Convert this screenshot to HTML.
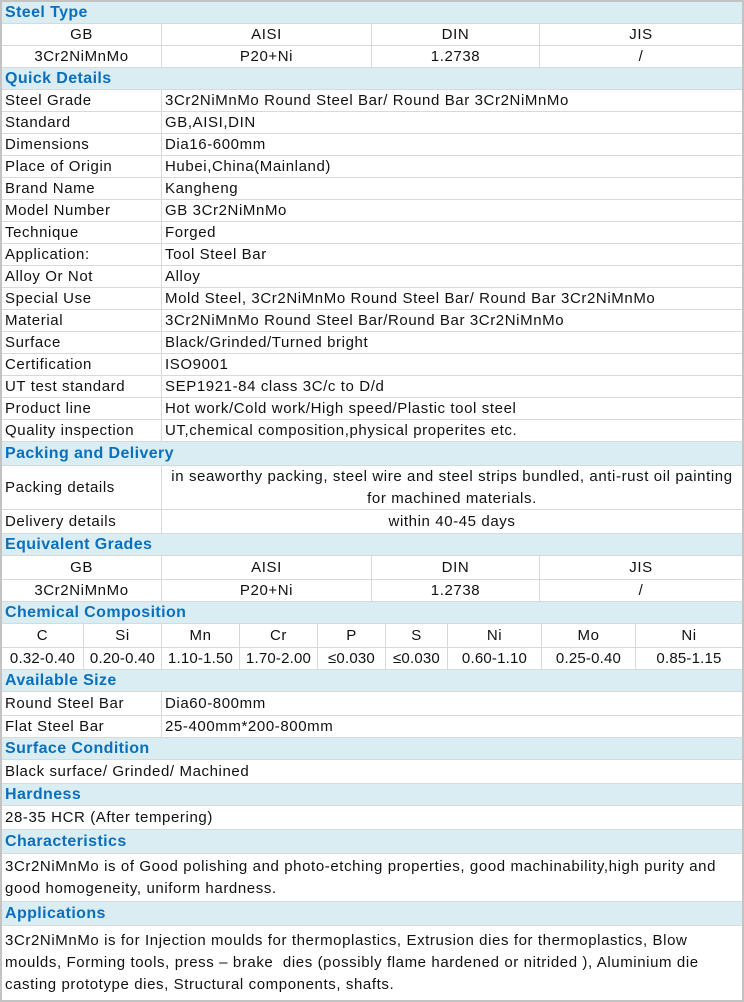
<!DOCTYPE html>
<html><head><meta charset="utf-8"><style>
*{box-sizing:border-box;margin:0;padding:0}
body{width:744px;height:1002px;background:#fff;overflow:hidden;font-family:"Liberation Sans","DejaVu Sans",sans-serif;font-size:15px;letter-spacing:0.6px;color:#111}
.w{position:absolute;left:0;top:0;width:744px;height:1002px;border:2px solid #c3c3c3}
.r{display:flex;border-bottom:1px solid #d9d9d9;align-items:stretch}
.c{border-right:1px solid #d9d9d9;padding-left:3px;display:flex;align-items:center;white-space:nowrap;overflow:hidden}
.c:last-child{border-right:none}
.m{justify-content:center;padding-left:0}
.h{background:#daedf3;color:#0a6fbd;font-weight:bold;font-size:16px;letter-spacing:0.4px;padding-left:3px;display:flex;align-items:center;border-bottom:1px solid #d9d9d9}
.t{padding:0 3px;line-height:22px;white-space:nowrap;overflow:hidden}
</style></head><body><div class="w">
<div class="h" style="height:22px">Steel Type</div>
<div class="r" style="height:22px"><div class="c m" style="width:160px">GB</div><div class="c m" style="width:210px">AISI</div><div class="c m" style="width:168px">DIN</div><div class="c m" style="width:202px">JIS</div></div>
<div class="r" style="height:22px"><div class="c m" style="width:160px">3Cr2NiMnMo</div><div class="c m" style="width:210px">P20+Ni</div><div class="c m" style="width:168px">1.2738</div><div class="c m" style="width:202px">/</div></div>
<div class="h" style="height:22px">Quick Details</div>
<div class="r" style="height:22px"><div class="c" style="width:160px">Steel Grade</div><div class="c" style="width:580px">3Cr2NiMnMo Round Steel Bar/ Round Bar 3Cr2NiMnMo</div></div>
<div class="r" style="height:22px"><div class="c" style="width:160px">Standard</div><div class="c" style="width:580px">GB,AISI,DIN</div></div>
<div class="r" style="height:22px"><div class="c" style="width:160px">Dimensions</div><div class="c" style="width:580px">Dia16-600mm</div></div>
<div class="r" style="height:22px"><div class="c" style="width:160px">Place of Origin</div><div class="c" style="width:580px">Hubei,China(Mainland)</div></div>
<div class="r" style="height:22px"><div class="c" style="width:160px">Brand Name</div><div class="c" style="width:580px">Kangheng</div></div>
<div class="r" style="height:22px"><div class="c" style="width:160px">Model Number</div><div class="c" style="width:580px">GB 3Cr2NiMnMo</div></div>
<div class="r" style="height:22px"><div class="c" style="width:160px">Technique</div><div class="c" style="width:580px">Forged</div></div>
<div class="r" style="height:22px"><div class="c" style="width:160px">Application:</div><div class="c" style="width:580px">Tool Steel Bar</div></div>
<div class="r" style="height:22px"><div class="c" style="width:160px">Alloy Or Not</div><div class="c" style="width:580px">Alloy</div></div>
<div class="r" style="height:22px"><div class="c" style="width:160px">Special Use</div><div class="c" style="width:580px">Mold Steel, 3Cr2NiMnMo Round Steel Bar/ Round Bar 3Cr2NiMnMo</div></div>
<div class="r" style="height:22px"><div class="c" style="width:160px">Material</div><div class="c" style="width:580px">3Cr2NiMnMo Round Steel Bar/Round Bar 3Cr2NiMnMo</div></div>
<div class="r" style="height:22px"><div class="c" style="width:160px">Surface</div><div class="c" style="width:580px">Black/Grinded/Turned bright</div></div>
<div class="r" style="height:22px"><div class="c" style="width:160px">Certification</div><div class="c" style="width:580px">ISO9001</div></div>
<div class="r" style="height:22px"><div class="c" style="width:160px">UT test standard</div><div class="c" style="width:580px">SEP1921-84 class 3C/c to D/d</div></div>
<div class="r" style="height:22px"><div class="c" style="width:160px">Product line</div><div class="c" style="width:580px">Hot work/Cold work/High speed/Plastic tool steel</div></div>
<div class="r" style="height:22px"><div class="c" style="width:160px">Quality inspection</div><div class="c" style="width:580px">UT,chemical composition,physical properites etc.</div></div>
<div class="h" style="height:24px">Packing and Delivery</div>
<div class="r" style="height:44px"><div class="c" style="width:160px">Packing details</div><div class="c m" style="width:580px;text-align:center;line-height:22px">in seaworthy packing, steel wire and steel strips bundled, anti-rust oil painting<br>for machined materials.</div></div>
<div class="r" style="height:24px"><div class="c" style="width:160px">Delivery details</div><div class="c m" style="width:580px">within 40-45 days</div></div>
<div class="h" style="height:22px">Equivalent Grades</div>
<div class="r" style="height:24px"><div class="c m" style="width:160px">GB</div><div class="c m" style="width:210px">AISI</div><div class="c m" style="width:168px">DIN</div><div class="c m" style="width:202px">JIS</div></div>
<div class="r" style="height:22px"><div class="c m" style="width:160px">3Cr2NiMnMo</div><div class="c m" style="width:210px">P20+Ni</div><div class="c m" style="width:168px">1.2738</div><div class="c m" style="width:202px">/</div></div>
<div class="h" style="height:22px">Chemical Composition</div>
<div class="r" style="height:24px"><div class="c m" style="width:82px">C</div><div class="c m" style="width:78px">Si</div><div class="c m" style="width:78px">Mn</div><div class="c m" style="width:78px">Cr</div><div class="c m" style="width:68px">P</div><div class="c m" style="width:62px">S</div><div class="c m" style="width:94px">Ni</div><div class="c m" style="width:94px">Mo</div><div class="c m" style="width:106px">Ni</div></div>
<div class="r" style="height:22px;letter-spacing:0.2px"><div class="c m" style="width:82px">0.32-0.40</div><div class="c m" style="width:78px">0.20-0.40</div><div class="c m" style="width:78px">1.10-1.50</div><div class="c m" style="width:78px">1.70-2.00</div><div class="c m" style="width:68px">≤0.030</div><div class="c m" style="width:62px">≤0.030</div><div class="c m" style="width:94px">0.60-1.10</div><div class="c m" style="width:94px">0.25-0.40</div><div class="c m" style="width:106px">0.85-1.15</div></div>
<div class="h" style="height:22px">Available Size</div>
<div class="r" style="height:24px"><div class="c" style="width:160px">Round Steel Bar</div><div class="c" style="width:580px">Dia60-800mm</div></div>
<div class="r" style="height:22px"><div class="c" style="width:160px">Flat Steel Bar</div><div class="c" style="width:580px">25-400mm*200-800mm</div></div>
<div class="h" style="height:22px">Surface Condition</div>
<div class="r" style="height:24px"><div class="c" style="width:740px">Black surface/ Grinded/ Machined</div></div>
<div class="h" style="height:22px">Hardness</div>
<div class="r" style="height:24px"><div class="c" style="width:740px">28-35 HCR (After tempering)</div></div>
<div class="h" style="height:24px">Characteristics</div>
<div class="r" style="height:48px"><div class="t" style="width:740px;padding-top:2px">3Cr2NiMnMo is of Good polishing and photo-etching properties, good machinability,high purity and<br>good homogeneity, uniform hardness.</div></div>
<div class="h" style="height:24px">Applications</div>
<div class="t" style="width:740px;padding-top:4px">3Cr2NiMnMo is for Injection moulds for thermoplastics, Extrusion dies for thermoplastics, Blow<br>moulds, Forming tools, press – brake &nbsp;dies (possibly flame hardened or nitrided ), Aluminium die<br>casting prototype dies, Structural components, shafts.</div>
</div></body></html>
